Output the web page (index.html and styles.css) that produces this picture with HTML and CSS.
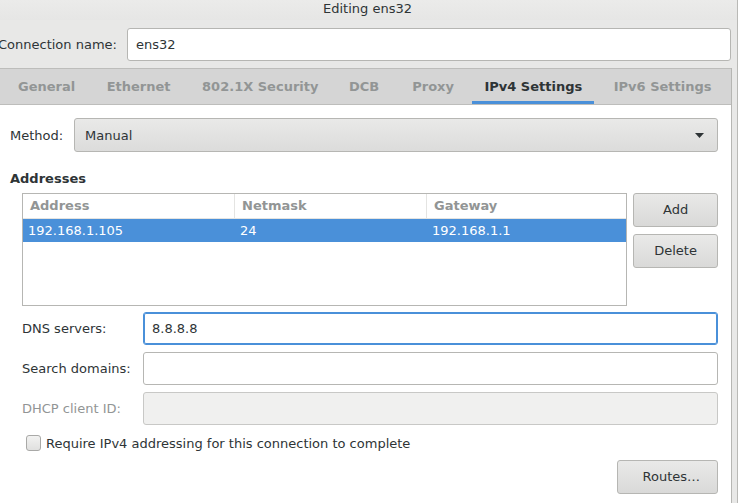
FILE: index.html
```html
<!DOCTYPE html>
<html>
<head>
<meta charset="utf-8">
<link rel="stylesheet" href="styles.css">
</head>
<body>
<div class="window">
  <div class="titlebar">Editing ens32</div>
  <div class="name-row">
    <span class="name-label">Connection name:</span>
    <div class="entry name-entry">ens32</div>
  </div>
  <div class="notebook">
    <div class="tabs">
      <span class="tab">General</span>
      <span class="tab">Ethernet</span>
      <span class="tab sec">802.1X Security</span>
      <span class="tab dcb">DCB</span>
      <span class="tab proxy">Proxy</span>
      <span class="tab active">IPv4 Settings</span>
      <span class="tab">IPv6 Settings</span>
    </div>
    <div class="page">
      <div class="method-row">
        <span class="method-label">Method:</span>
        <div class="combo">
          <span>Manual</span>
          <svg class="arrow" width="9" height="5" viewBox="0 0 9 5"><path d="M0 0H9L4.5 5Z" fill="#2e3436"/></svg>
        </div>
      </div>
      <div class="section-title">Addresses</div>
      <div class="addr-row">
        <div class="table">
          <div class="thead">
            <div class="th c1">Address</div>
            <div class="th c2">Netmask</div>
            <div class="th c3">Gateway</div>
          </div>
          <div class="tr selected">
            <div class="td c1">192.168.1.105</div>
            <div class="td c2">24</div>
            <div class="td c3">192.168.1.1</div>
          </div>
        </div>
        <div class="addr-buttons">
          <div class="button">Add</div>
          <div class="button">Delete</div>
        </div>
      </div>
      <div class="form">
        <div class="form-row">
          <span class="form-label">DNS servers:</span>
          <div class="entry focused">8.8.8.8</div>
        </div>
        <div class="form-row">
          <span class="form-label">Search domains:</span>
          <div class="entry"></div>
        </div>
        <div class="form-row">
          <span class="form-label disabled">DHCP client ID:</span>
          <div class="entry disabled-entry"></div>
        </div>
      </div>
      <div class="check-row">
        <span class="checkbox"></span>
        <span>Require IPv4 addressing for this connection to complete</span>
      </div>
      <div class="routes-row">
        <div class="button routes">Routes…</div>
      </div>
    </div>
  </div>
</div>
</body>
</html>
```
FILE: styles.css
```css
* { box-sizing: border-box; }
html, body { margin: 0; padding: 0; }
body {
  width: 738px;
  height: 503px;
  overflow: hidden;
  font-family: "DejaVu Sans", sans-serif;
  font-size: 13px;
  color: #2e3436;
  background: #e8e8e7;
}
.window {
  width: 738px;
  height: 503px;
  border-right: 1px solid #b9b9b6;
  background: #e8e8e7;
}
.titlebar {
  height: 20px;
  line-height: 18px;
  text-align: center;
  padding-right: 2px;
  background: linear-gradient(#ebebea, #e6e6e5);
}
.name-row {
  display: flex;
  align-items: center;
  height: 33px;
  margin-top: 8px;
  margin-right: 6px;
}
.name-label {
  margin-left: -2px;
  width: 129px;
  flex: none;
  white-space: nowrap;
}
.entry {
  flex: 1;
  height: 33px;
  line-height: 31px;
  padding: 0 8px;
  background: #fff;
  border: 1px solid #b6b6b3;
  border-radius: 3px;
}
.notebook {
  margin-top: 7px;
  width: 732px;
  border-right: 1px solid #b6b6b3;
  height: 440px;
}
.tabs {
  display: flex;
  height: 37px;
  background: #d5d5d5;
  border-top: 1px solid #bdbdbb;
  border-bottom: 1px solid #bdbdbb;
  padding-left: 6px;
  overflow: hidden;
}
.tab {
  flex: none;
  white-space: nowrap;
  padding: 1px 12px 0;
  line-height: 34px;
  font-weight: bold;
  color: #929595;
  margin-right: 7.5px;
  border-bottom: 3px solid transparent;
}
.tab.sec { margin-right: 6.5px; }
.tab.dcb { margin-right: 9px; }
.tab.proxy { margin-right: 6.5px; }
.tab.active {
  color: #2e3436;
  border-bottom-color: #4a90d9;
}
.page {
  background: #fff;
  height: 400px;
  padding: 13px 13px 0 10px;
}
.method-row {
  display: flex;
  align-items: center;
}
.method-label { width: 64px; flex: none; }
.combo {
  flex: 1;
  height: 34px;
  display: flex;
  align-items: center;
  justify-content: space-between;
  padding: 0 13px 0 10px;
  border: 1px solid #b6b6b3;
  border-radius: 3px;
  background: linear-gradient(#e9e9e8, #dcdcdb);
}
.section-title {
  font-weight: bold;
  margin-top: 19px;
  line-height: 16px;
}
.addr-row {
  display: flex;
  margin-top: 6px;
  margin-left: 12px;
}
.table {
  width: 606px;
  height: 113px;
  border: 1px solid #b6b6b3;
  background: #fff;
}
.thead, .tr { display: flex; }
.thead { height: 25px; border-bottom: 1px solid #e4e4e2; }
.th {
  color: #929595;
  font-weight: bold;
  line-height: 24px;
  padding-left: 7px;
}
.th.c1, .td.c1 { width: 212px; }
.th.c2, .td.c2 { width: 192px; }
.th.c1, .th.c2 { border-right: 1px solid #e4e4e2; }
.th.c3, .td.c3 { flex: 1; }
.tr.selected {
  background: #4a90d9;
  color: #fff;
  height: 23px;
  line-height: 23px;
}
.td { padding-left: 5px; }
.addr-buttons {
  margin-left: 6px;
  display: flex;
  flex-direction: column;
  gap: 7px;
  width: 85px;
}
.button {
  height: 34px;
  line-height: 32px;
  text-align: center;
  border: 1px solid #b6b6b3;
  border-radius: 3px;
  background: linear-gradient(#e9e9e8, #d9d9d8);
}
.form {
  margin-top: 6px;
  margin-left: 12px;
  display: flex;
  flex-direction: column;
  gap: 7px;
}
.form-row {
  display: flex;
  align-items: center;
}
.form-label { width: 121px; flex: none; }
.form-label.disabled { color: #929595; }
.entry.focused {
  border-color: #4a90d9;
  box-shadow: inset 0 0 0 1px #4a90d9;
  padding-left: 8px;
}
.entry.disabled-entry {
  background: #f0f0ef;
  border-color: #c8c8c6;
}
.check-row {
  display: flex;
  align-items: center;
  margin-top: 10px;
  margin-left: 16px;
  gap: 5px;
  height: 16px;
}
.checkbox {
  width: 15px;
  height: 16px;
  border: 1px solid #a9a9a7;
  border-radius: 3px;
  background: linear-gradient(#f2f2f1, #e0e0df);
}
.routes-row {
  display: flex;
  justify-content: flex-end;
  margin-top: 9px;
}
.button.routes {
  width: 101px;
  text-align: right;
  padding-right: 17px;
}
```
